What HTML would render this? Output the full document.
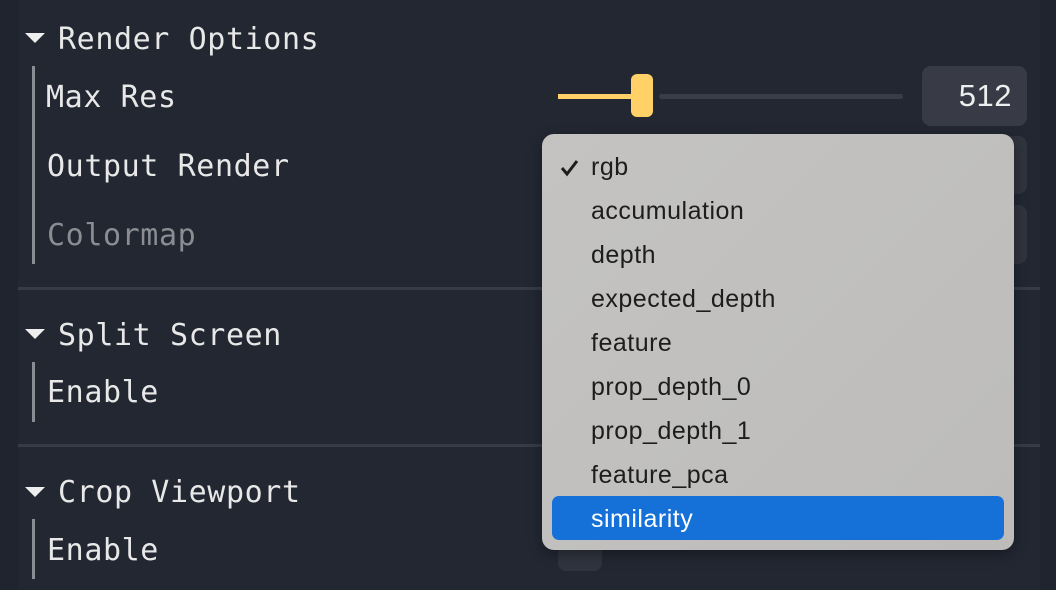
<!DOCTYPE html>
<html><head><style>
body{margin:0;width:1056px;height:590px;background:#222732;overflow:hidden;position:relative;font-family:"DejaVu Sans Mono","Liberation Mono",monospace;color:#e8e8e8}
.a{position:absolute}
.t{font-size:30px;letter-spacing:0.6px;line-height:1;white-space:pre}
.tri{width:0;height:0;border-left:10px solid transparent;border-right:10px solid transparent;border-top:10px solid #eee}
.vb{background:#8a8d94;width:3px}
.hr{background:#363b46;height:3px;left:18px;width:1022px}
.dd{font-family:"Liberation Sans","DejaVu Sans",sans-serif;font-size:25px;letter-spacing:0.5px;color:#1d1d1d;left:591px}
</style></head><body>
<div class="a" style="left:0;top:0;width:18px;height:590px;background:#1f242e"></div>
<div class="a" style="left:1040px;top:0;width:16px;height:590px;background:#1f242e"></div>
<div class="a tri" style="left:25px;top:33px"></div>
<div class="a t" style="left:58px;top:25px">Render Options</div>
<div class="a vb" style="left:32px;top:66px;height:198px"></div>
<div class="a t" style="left:46px;top:83px">Max Res</div>
<div class="a t" style="left:47px;top:152px">Output Render</div>
<div class="a t" style="left:47px;top:221px;color:#8b8d92">Colormap</div>
<div class="a" style="left:558px;top:94px;width:74px;height:5px;background:#ffd166"></div>
<div class="a" style="left:659px;top:94px;width:244px;height:5px;background:#393d48;border-radius:3px"></div>
<div class="a" style="left:631px;top:74px;width:22px;height:43px;background:#ffd166;border-radius:6px"></div>
<div class="a" style="left:922px;top:66px;width:105px;height:60px;background:#383b45;border-radius:9px"></div>
<div class="a" style="left:922px;top:78px;width:90px;text-align:right;font-family:'Liberation Sans',sans-serif;font-size:31px;letter-spacing:0.5px;color:#eee">512</div>
<div class="a" style="left:900px;top:136px;width:127px;height:58px;background:#30343e;border-radius:9px"></div>
<div class="a" style="left:900px;top:205px;width:127px;height:59px;background:#30343e;border-radius:9px"></div>
<div class="a hr" style="top:287px"></div>
<div class="a tri" style="left:25px;top:329px"></div>
<div class="a t" style="left:58px;top:321px">Split Screen</div>
<div class="a vb" style="left:32px;top:362px;height:60px"></div>
<div class="a t" style="left:47px;top:378px">Enable</div>
<div class="a hr" style="top:444px"></div>
<div class="a tri" style="left:25px;top:487px"></div>
<div class="a t" style="left:58px;top:478px">Crop Viewport</div>
<div class="a vb" style="left:32px;top:519px;height:60px"></div>
<div class="a t" style="left:47px;top:536px">Enable</div>
<div class="a" style="left:558px;top:530px;width:44px;height:41px;background:#30343e;border-radius:8px"></div>
<div class="a" style="left:542px;top:134px;width:472px;height:416px;background:linear-gradient(135deg,#c4c3c1,#bdbcba);border-radius:12px;box-shadow:0 4px 14px rgba(0,0,0,.35)"></div>
<div class="a" style="left:552px;top:496px;width:452px;height:44px;background:#1570d8;border-radius:7px"></div>
<svg class="a" style="left:559px;top:158px" width="22" height="20"><path d="M3 10 L8 16 L18 3" stroke="#1d1d1d" stroke-width="3" fill="none"/></svg>
<div class="a dd" style="top:153px">rgb</div>
<div class="a dd" style="top:197px">accumulation</div>
<div class="a dd" style="top:241px">depth</div>
<div class="a dd" style="top:285px">expected_depth</div>
<div class="a dd" style="top:329px">feature</div>
<div class="a dd" style="top:373px">prop_depth_0</div>
<div class="a dd" style="top:417px">prop_depth_1</div>
<div class="a dd" style="top:461px">feature_pca</div>
<div class="a dd" style="top:505px;color:#fff">similarity</div>
</body></html>
